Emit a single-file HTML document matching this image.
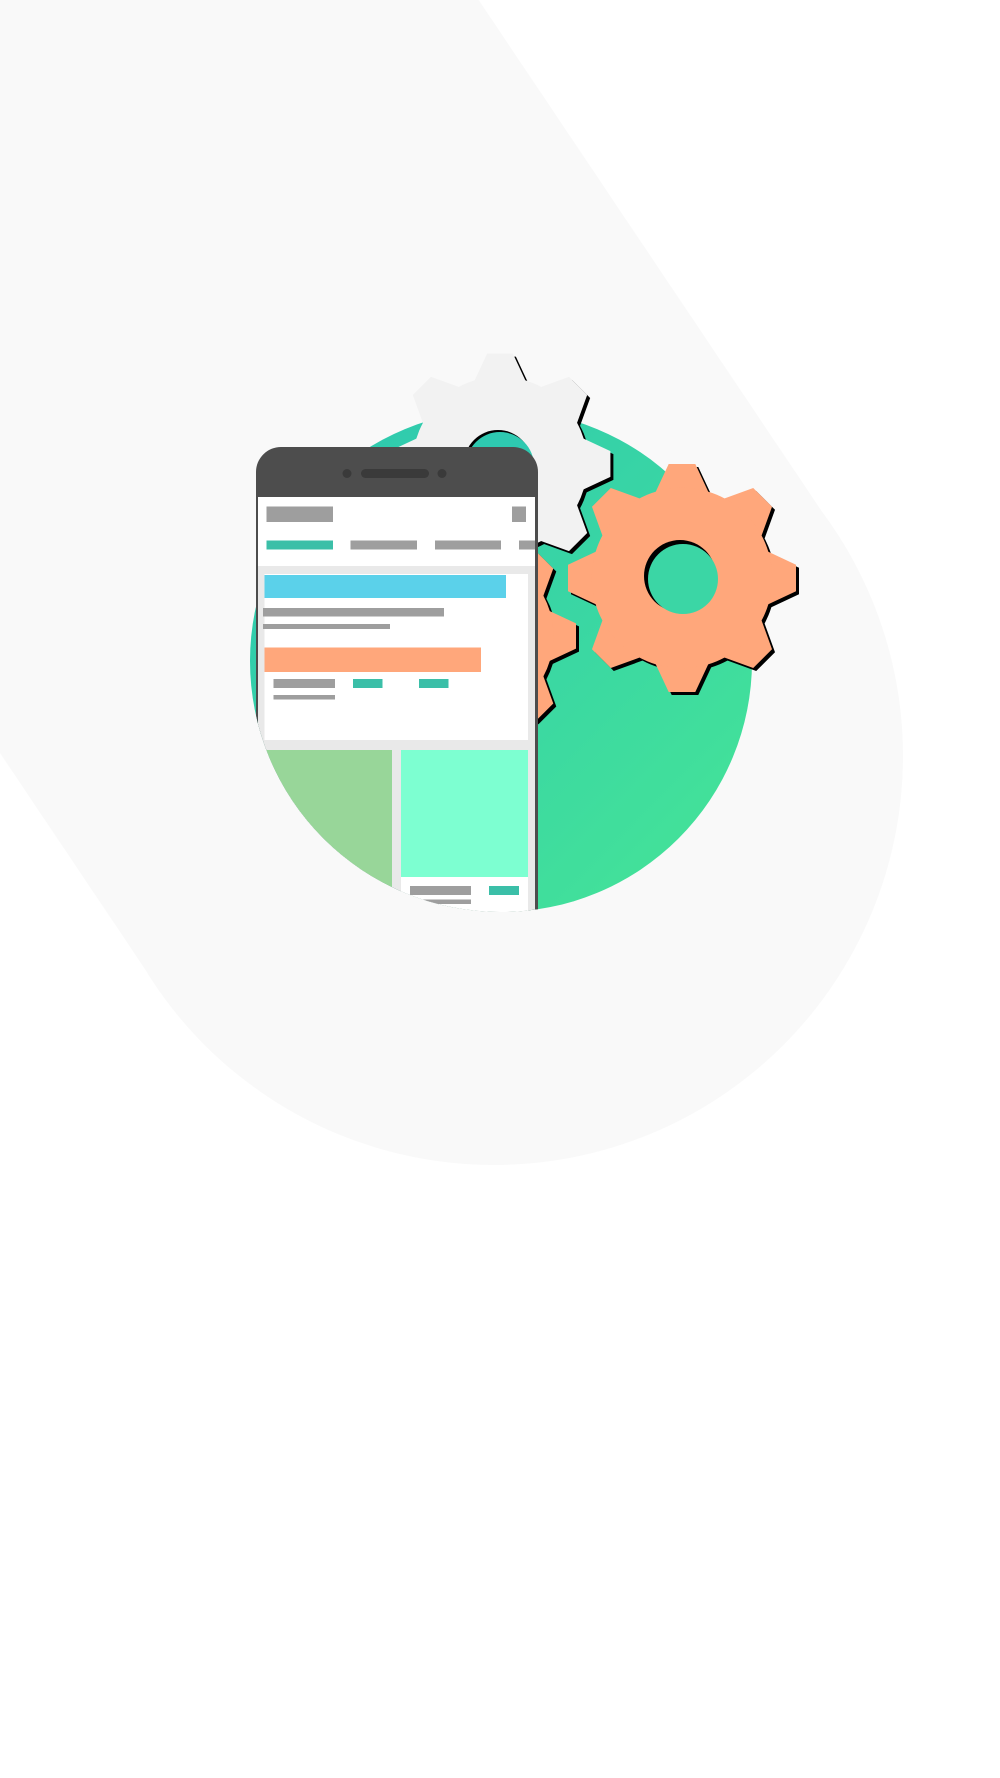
<!DOCTYPE html>
<html><head><meta charset="utf-8"><style>
html,body{margin:0;padding:0;background:#fff;width:1000px;height:1778px;overflow:hidden}
svg{display:block}
</style></head><body>
<svg width="1000" height="1778" viewBox="0 0 1000 1778" xmlns="http://www.w3.org/2000/svg">
<defs>
<linearGradient id="g" x1="0" y1="0" x2="1" y2="1">
<stop offset="0" stop-color="#2cc6b2"/><stop offset="1" stop-color="#46e596"/>
</linearGradient>
<clipPath id="cp"><circle cx="501" cy="661" r="251"/><rect x="0" y="0" width="1000" height="640"/></clipPath>
<g id="tooth8">
<polygon points="-28,-90 -14,-120 14,-120 28,-90"/>
<polygon points="-28,-90 -14,-120 14,-120 28,-90" transform="rotate(45)"/>
<polygon points="-28,-90 -14,-120 14,-120 28,-90" transform="rotate(90)"/>
<polygon points="-28,-90 -14,-120 14,-120 28,-90" transform="rotate(135)"/>
<polygon points="-28,-90 -14,-120 14,-120 28,-90" transform="rotate(180)"/>
<polygon points="-28,-90 -14,-120 14,-120 28,-90" transform="rotate(225)"/>
<polygon points="-28,-90 -14,-120 14,-120 28,-90" transform="rotate(270)"/>
<polygon points="-28,-90 -14,-120 14,-120 28,-90" transform="rotate(315)"/>
<circle r="95"/>
</g>
</defs>
<polygon points="833,528 276,-302 -402,154 155,984" fill="#f9f9f9"/>
<circle cx="494" cy="756" r="409" fill="#f9f9f9"/>
<circle cx="501" cy="661" r="251" fill="url(#g)"/>
<g transform="translate(503,467) scale(0.92)" fill="#000"><use href="#tooth8"/></g>
<g transform="translate(500,464) scale(0.92)" fill="#f2f2f2"><use href="#tooth8"/></g>
<circle cx="498" cy="464" r="34" fill="#000"/>
<circle cx="500" cy="466" r="34" fill="#2ec9b0"/>
<g transform="translate(471,639) scale(0.9)" fill="#000"><use href="#tooth8"/></g>
<g transform="translate(468,636) scale(0.9)" fill="#ffa77b"><use href="#tooth8"/></g>
<g transform="translate(685,581) scale(0.95)" fill="#000"><use href="#tooth8"/></g>
<g transform="translate(682,578) scale(0.95)" fill="#ffa77b"><use href="#tooth8"/></g>
<circle cx="680" cy="576" r="36" fill="#000"/>
<circle cx="683" cy="579" r="35" fill="#3bd6a5"/>
<g clip-path="url(#cp)">
<path d="M256,472 a25,25 0 0 1 25,-25 h232 a25,25 0 0 1 25,25 V940 H256 Z" fill="#4d4d4d"/>
<rect x="258" y="497" width="277" height="450" fill="#e9e9e9"/>
<rect x="258" y="497" width="277" height="69" fill="#fff"/>
<circle cx="347" cy="473.5" r="4.5" fill="#3a3a3a"/>
<circle cx="442" cy="473.5" r="4.5" fill="#3a3a3a"/>
<rect x="361" y="469" width="68" height="9" rx="4.5" fill="#3a3a3a"/>
<rect x="266.5" y="506.5" width="66.5" height="15.5" fill="#9e9e9e"/>
<rect x="512" y="506.5" width="14" height="15.5" fill="#9e9e9e"/>
<rect x="266.5" y="540.5" width="66.5" height="9" fill="#3bbfa8"/>
<rect x="350.5" y="540.5" width="66.5" height="9" fill="#9e9e9e"/>
<rect x="435" y="540.5" width="66" height="9" fill="#9e9e9e"/>
<rect x="519" y="540.5" width="16" height="9" fill="#9e9e9e"/>
<rect x="264.5" y="574" width="263.5" height="166" fill="#fff"/>
<rect x="264.5" y="575" width="241.5" height="23" fill="#5bd1ea"/>
<rect x="263" y="608" width="181" height="8.5" fill="#9e9e9e"/>
<rect x="263" y="624" width="127" height="5" fill="#9e9e9e"/>
<rect x="264.5" y="647.5" width="216.5" height="24.5" fill="#ffa77b"/>
<rect x="273.5" y="679" width="61.5" height="9" fill="#9e9e9e"/>
<rect x="353" y="679" width="29.5" height="9" fill="#3bbfa8"/>
<rect x="419" y="679" width="29.5" height="9" fill="#3bbfa8"/>
<rect x="273.5" y="695" width="61.5" height="4.5" fill="#9e9e9e"/>
<rect x="264.5" y="750" width="127.5" height="170" fill="#98d699"/>
<rect x="401" y="750" width="127" height="170" fill="#fff"/>
<rect x="401" y="750" width="127" height="127" fill="#7dffd1"/>
<rect x="410" y="886" width="61" height="9" fill="#9e9e9e"/>
<rect x="489" y="886" width="30" height="9" fill="#3bbfa8"/>
<rect x="410" y="899.5" width="61" height="4.5" fill="#9e9e9e"/>
<rect x="535" y="472" width="3" height="468" fill="#4d4d4d"/>
</g>
</svg>
</body></html>
